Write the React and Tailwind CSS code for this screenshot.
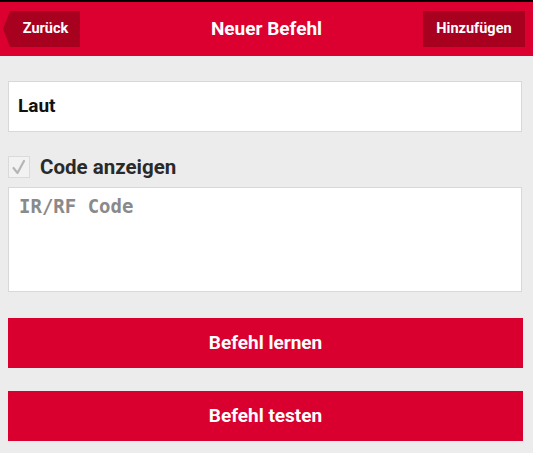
import React from "react";

const App = () => {
  return (
    <div className="w-[533px] h-[453px] bg-[#ececec] font-['Roboto',sans-serif] overflow-hidden">
      {/* Header */}
      <div className="border-t-2 border-black bg-[#dc0030] h-[56px] flex items-center justify-between pl-[3px] pr-[8px]">
        <button className="h-[36px] w-[77px] bg-[#a8001f] text-white text-[14.5px] font-bold pl-[8px] [clip-path:polygon(7px_0,100%_0,100%_100%,7px_100%,0_50%)]">
          Zurück
        </button>
        <h1 className="text-white text-[19px] font-bold ml-[30px]">Neuer Befehl</h1>
        <button className="h-[36px] w-[102px] bg-[#a8001f] text-white text-[14.5px] font-bold">
          Hinzufügen
        </button>
      </div>

      <div className="px-[8px] pt-[25px] flex flex-col">
        {/* Name input */}
        <div className="h-[51px] bg-white border border-[#d8d8d8] flex items-center px-[9px] w-[514px]">
          <span className="text-[19px] font-bold text-[#111]">Laut</span>
        </div>

        {/* Checkbox */}
        <div className="flex items-center gap-[10px] mt-[24px] h-[22px]">
          <div className="w-[22px] h-[22px] bg-[#f2f2f2] border border-[#dadada] flex items-center justify-center">
            <svg width="18" height="18" viewBox="0 0 18 18" fill="none">
              <path d="M3.5 10 L7.5 15 L14 3" stroke="#b5b5b5" strokeWidth="2.2" strokeLinecap="round" strokeLinejoin="round" />
            </svg>
          </div>
          <span className="text-[20.5px] font-bold text-[#2a2a2a]">Code anzeigen</span>
        </div>

        {/* Textarea */}
        <div className="mt-[9px] h-[105px] w-[514px] bg-white border border-[#d8d8d8] px-[10px] pt-[4px]">
          <span className="font-['DejaVu_Sans_Mono',monospace] text-[19px] font-bold text-[#8a8a8a]">IR/RF Code</span>
        </div>

        {/* Buttons */}
        <button className="mt-[26px] h-[50px] w-[515px] bg-[#d9002f] text-white text-[19px] font-bold">
          Befehl lernen
        </button>
        <button className="mt-[23px] h-[50px] w-[515px] bg-[#d9002f] text-white text-[19px] font-bold">
          Befehl testen
        </button>
      </div>
    </div>
  );
};

export default App;
